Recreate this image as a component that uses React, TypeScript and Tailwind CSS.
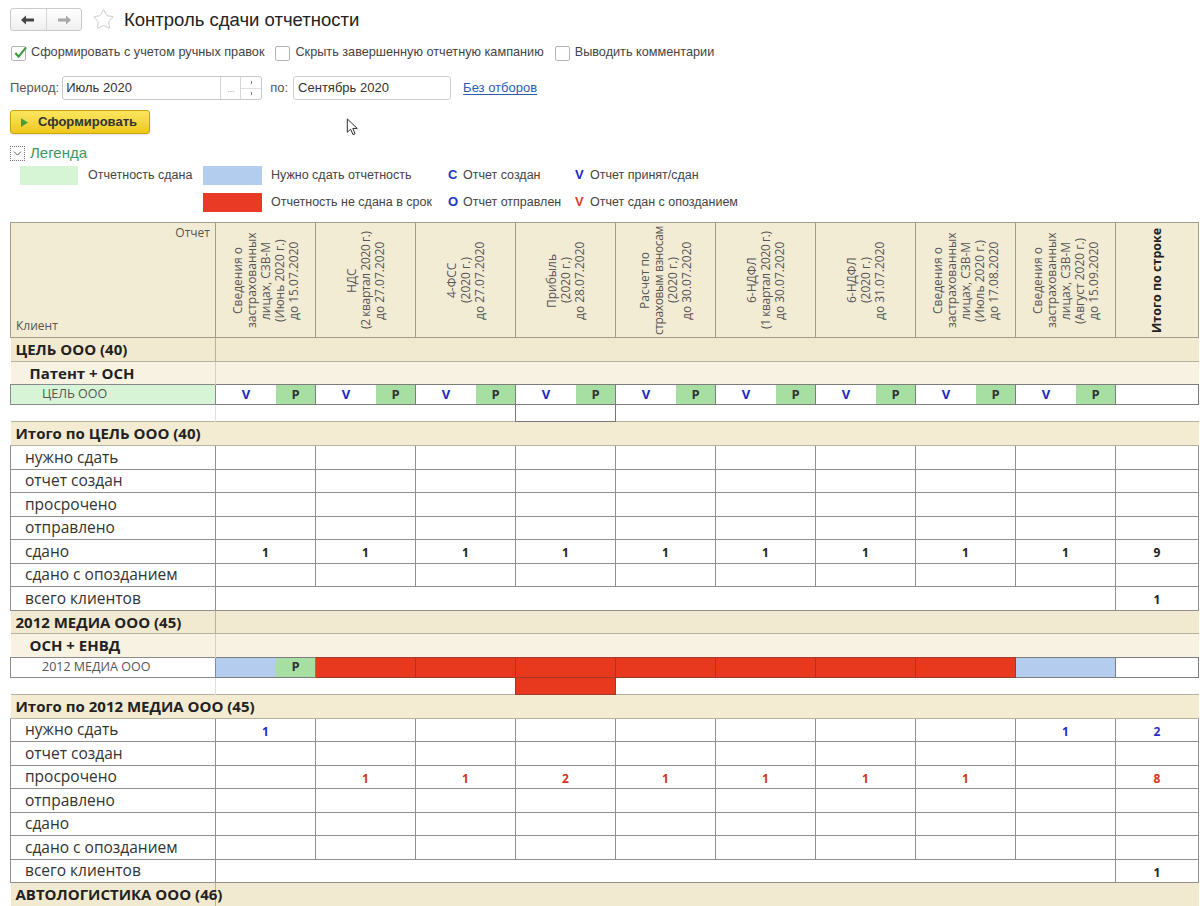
import { Star, ChevronDown } from "lucide-react";

const reports: string[][] = [
  ["Сведения о", "застрахованных", "лицах, СЗВ-М", "(Июнь 2020 г.)", "до 15.07.2020"],
  ["НДС", "(2 квартал 2020 г.)", "до 27.07.2020"],
  ["4-ФСС", "(2020 г.)", "до 27.07.2020"],
  ["Прибыль", "(2020 г.)", "до 28.07.2020"],
  ["Расчет по", "страховым взносам", "(2020 г.)", "до 30.07.2020"],
  ["6-НДФЛ", "(1 квартал 2020 г.)", "до 30.07.2020"],
  ["6-НДФЛ", "(2020 г.)", "до 31.07.2020"],
  ["Сведения о", "застрахованных", "лицах, СЗВ-М", "(Июль 2020 г.)", "до 17.08.2020"],
  ["Сведения о", "застрахованных", "лицах, СЗВ-М", "(Август 2020 г.)", "до 15.09.2020"],
];

type Stat = { label: string; values?: (number | null)[]; total?: number; tone?: "black" | "blue" | "red"; merged?: boolean };

const section1: Stat[] = [
  { label: "нужно сдать" },
  { label: "отчет создан" },
  { label: "просрочено" },
  { label: "отправлено" },
  { label: "сдано", values: [1, 1, 1, 1, 1, 1, 1, 1, 1], total: 9, tone: "black" },
  { label: "сдано с опозданием" },
  { label: "всего клиентов", total: 1, tone: "black", merged: true },
];

const section2: Stat[] = [
  { label: "нужно сдать", values: [1, null, null, null, null, null, null, null, 1], total: 2, tone: "blue" },
  { label: "отчет создан" },
  { label: "просрочено", values: [null, 1, 1, 2, 1, 1, 1, 1, null], total: 8, tone: "red" },
  { label: "отправлено" },
  { label: "сдано" },
  { label: "сдано с опозданием" },
  { label: "всего клиентов", total: 1, tone: "black", merged: true },
];

const toneClass = {
  black: "text-[#222]",
  blue: "text-[#1f2fc8]",
  red: "text-[#d8321c]",
};

function Checkbox({ checked }: { checked?: boolean }) {
  return (
    <span className="relative inline-block w-[15px] h-[15px] border border-[#b5b5b5] rounded-[2px] bg-white shrink-0">
      {checked && (
        <svg viewBox="0 0 16 16" className="absolute left-[1px] -top-[2px] w-[15px] h-[15px]">
          <path d="M2.5 8.5 L6 12.5 L14 2.5" fill="none" stroke="#3c9a3c" strokeWidth="2.2" />
        </svg>
      )}
    </span>
  );
}

function StatRows({ rows }: { rows: Stat[] }) {
  return (
    <>
      {rows.map((r) => (
        <tr key={r.label} className="h-[23.5px]">
          <td className="p-0 pl-[14px] border border-[#8f8f8f] text-[15.5px] text-[#333] leading-none bg-white whitespace-nowrap">{r.label}</td>
          {r.merged ? (
            <td colSpan={9} className="p-0 border border-[#8f8f8f] bg-white" />
          ) : (
            Array.from({ length: 9 }).map((_, i) => (
              <td
                key={i}
                className={`p-0 pt-[4px] border border-[#8f8f8f] bg-white text-center text-[12px] font-bold ${toneClass[r.tone ?? "black"]}`}
              >
                {r.values?.[i] ?? ""}
              </td>
            ))
          )}
          <td className={`p-0 pt-[4px] border border-[#8f8f8f] bg-white text-center text-[12px] font-bold ${toneClass[r.tone ?? "black"]}`}>
            {r.total ?? ""}
          </td>
        </tr>
      ))}
    </>
  );
}

function GroupRow({ title }: { title: string }) {
  return (
    <tr className="h-[23px]">
      <td className="p-0 pl-[5px] border-y border-r border-[#b8b1a0] border-l-0 bg-[#f2ead0] text-[15px] font-bold text-[#222] whitespace-nowrap">{title}</td>
      <td colSpan={10} className="p-0 border-y border-[#b8b1a0] bg-[#f2ead0]" />
    </tr>
  );
}

function SubRow({ title }: { title: string }) {
  return (
    <tr className="h-[23px]">
      <td className="p-0 pl-[19px] border-r border-[#d6d0c0] bg-[#f7f2e2] text-[15px] font-bold text-[#222]">{title}</td>
      <td colSpan={10} className="p-0 bg-[#f7f2e2]" />
    </tr>
  );
}

function TotalHeader({ title }: { title: string }) {
  return (
    <tr className="h-[24px]">
      <td colSpan={11} className="p-0 pl-[5px] border-y border-[#b8b1a0] bg-[#f3ebd2] text-[15px] font-bold text-[#222] whitespace-nowrap">
        {title}
      </td>
    </tr>
  );
}

function SpillRow({ red }: { red?: boolean }) {
  return (
    <tr className="h-[17px]">
      <td className="p-0 bg-white border-r border-[#e0e0e0]" />
      <td colSpan={3} className="p-0 bg-white" />
      <td className={`p-0 border-x border-b ${red ? "bg-[#e8391f] border-[#9c3a2c]" : "bg-white border-[#777]"}`} />
      <td colSpan={6} className="p-0 bg-white" />
    </tr>
  );
}

export default function App() {
  return (
    <div className="w-[1200px] h-[906px] overflow-hidden bg-white text-[#444] font-['Liberation_Sans',Arial,sans-serif]">
      {/* Title bar */}
      <div className="flex items-center pt-[8px] pl-[10px] h-[31px]">
        <div className="flex h-[23px] w-[72px] border border-[#c9c9c9] rounded-[3px] bg-gradient-to-b from-white to-[#efefef]">
          <div className="flex-1 flex items-center justify-center border-r border-[#d6d6d6]">
            <svg viewBox="0 0 14 10" className="w-[14px] h-[10px]">
              <path d="M0 5 L5 0.5 L5 3.5 L13 3.5 L13 6.5 L5 6.5 L5 9.5 Z" fill="#444" />
            </svg>
          </div>
          <div className="flex-1 flex items-center justify-center">
            <svg viewBox="0 0 14 10" className="w-[14px] h-[10px]">
              <path d="M14 5 L9 0.5 L9 3.5 L1 3.5 L1 6.5 L9 6.5 L9 9.5 Z" fill="#a8a8a8" />
            </svg>
          </div>
        </div>
        <Star className="ml-[10px] w-[23px] h-[23px] text-[#c8c8c8]" strokeWidth={1} />
        <span className="ml-[9px] text-[18.5px] text-[#222]">Контроль сдачи отчетности</span>
      </div>

      {/* Options */}
      <div className="flex items-center mt-[14px] pl-[11px] h-[16px] text-[12.7px] text-[#444]">
        <Checkbox checked />
        <span className="ml-[5px]">Сформировать с учетом ручных правок</span>
        <span className="ml-[11px]" />
        <Checkbox />
        <span className="ml-[5px]">Скрыть завершенную отчетную кампанию</span>
        <span className="ml-[11px]" />
        <Checkbox />
        <span className="ml-[5px]">Выводить комментарии</span>
      </div>

      {/* Period */}
      <div className="flex items-center mt-[15px] pl-[10px] h-[24px] text-[13px]">
        <span className="text-[#555]">Период:</span>
        <div className="ml-[3px] flex h-[24px] w-[200px] border border-[#c8c8c8] rounded-[3px] bg-white">
          <div className="flex-1 pl-[3px] flex items-center text-[#333]">Июль 2020</div>
          <div className="w-[20px] border-l border-[#d6d6d6] flex items-end justify-center pb-[5px] text-[9px] text-[#999] leading-none">...</div>
          <div className="w-[21px] border-l border-[#d6d6d6] flex flex-col">
            <div className="flex-1 border-b border-[#e0e0e0] flex items-center justify-center">
              <span className="block w-[1px] h-[3px] bg-[#777]" />
            </div>
            <div className="flex-1 flex items-center justify-center">
              <span className="block w-[1px] h-[3px] bg-[#777]" />
            </div>
          </div>
        </div>
        <span className="ml-[8px] text-[#555]">по:</span>
        <div className="ml-[5px] flex items-center h-[24px] w-[158px] border border-[#d0d0d0] rounded-[3px] pl-[4px] text-[#333]">Сентябрь 2020</div>
        <a className="ml-[12px] text-[#2b5eb3] underline underline-offset-2">Без отборов</a>
      </div>

      {/* Generate button + cursor */}
      <div className="flex items-start mt-[10px] pl-[10px] h-[25px]">
        <button className="flex items-center h-[24px] w-[140px] rounded-[3px] border border-[#c8a50a] bg-gradient-to-b from-[#fbe65e] to-[#efc816] text-[13px] font-bold text-[#333] shadow-sm">
          <svg viewBox="0 0 8 10" className="ml-[10px] w-[7px] h-[9px]">
            <path d="M0 0 L8 5 L0 10 Z" fill="#3fa23f" />
          </svg>
          <span className="ml-[10px]">Сформировать</span>
        </button>
        <svg viewBox="0 0 14 20" className="ml-[196px] mt-[8px] w-[14px] h-[19px]">
          <path d="M1 1 L1 15 L4.5 11.8 L7 17.5 L9.2 16.6 L6.8 11 L11.5 11 Z" fill="white" stroke="#222" strokeWidth="1" strokeLinejoin="round" />
        </svg>
      </div>

      {/* Legend */}
      <div className="flex items-center mt-[10px] pl-[10px] h-[16px]">
        <span className="flex items-center justify-center w-[15px] h-[15px] border border-dotted border-[#777]">
          <ChevronDown className="w-[13px] h-[13px] text-[#444]" strokeWidth={1.6} />
        </span>
        <span className="ml-[5px] text-[15px] text-[#3b9866]">Легенда</span>
      </div>
      <div className="mt-[4px] pl-[20px] text-[12.5px] text-[#444]">
        <div className="flex items-center h-[20px]">
          <span className="w-[58px] h-[19px] bg-[#d6f5d5]" />
          <span className="ml-[10px] w-[115px]">Отчетность сдана</span>
          <span className="w-[59px] h-[19px] bg-[#b3cdef]" />
          <span className="ml-[9px] w-[177px]">Нужно сдать отчетность</span>
          <span className="w-[15px] font-bold text-[#2038c6] text-[13px]">С</span>
          <span className="w-[112px]">Отчет создан</span>
          <span className="w-[15px] font-bold text-[#1a28c0] text-[13px]">V</span>
          <span>Отчет принят/сдан</span>
        </div>
        <div className="flex items-center h-[20px] mt-[7px]">
          <span className="w-[58px] h-[19px]" />
          <span className="ml-[10px] w-[115px]" />
          <span className="w-[59px] h-[19px] bg-[#e83a24]" />
          <span className="ml-[9px] w-[177px]">Отчетность не сдана в срок</span>
          <span className="w-[15px] font-bold text-[#2038c6] text-[13px]">О</span>
          <span className="w-[112px]">Отчет отправлен</span>
          <span className="w-[15px] font-bold text-[#e0401f] text-[13px]">V</span>
          <span>Отчет сдан с опозданием</span>
        </div>
      </div>

      {/* Report table */}
      <table className="mt-[10px] ml-[10px] w-[1188px] table-fixed border-collapse font-['Open_Sans',sans-serif]">
        <colgroup>
          <col className="w-[205px]" />
          {reports.map((_, i) => (
            <col key={i} className="w-[100px]" />
          ))}
          <col className="w-[83px]" />
        </colgroup>
        <tbody>
          <tr className="h-[115px]">
            <td className="p-0 border border-[#a39c89] bg-[#f3ecd5] align-top">
              <div className="flex flex-col justify-between h-[113px] text-[12px] text-[#555] px-[5px] pt-[1px] pb-[1px]">
                <span className="self-end">Отчет</span>
                <span>Клиент</span>
              </div>
            </td>
            {reports.map((lines, i) => (
              <td key={i} className="p-0 border border-[#a39c89] bg-[#f3ecd5]">
                <div className="flex items-center justify-center h-[113px] overflow-hidden">
                  <div className="[writing-mode:vertical-rl] rotate-180 h-[113px] text-center text-[12px] leading-[14px] text-[#555] whitespace-nowrap">
                    {lines.map((l) => (
                      <div key={l} className={l.length > 16 ? "tracking-[-0.4px]" : ""}>
                        {l}
                      </div>
                    ))}
                  </div>
                </div>
              </td>
            ))}
            <td className="p-0 border border-[#a39c89] bg-[#f3ecd5]">
              <div className="flex items-center justify-center h-[113px]">
                <div className="[writing-mode:vertical-rl] rotate-180 h-[113px] text-center text-[12.5px] font-bold text-[#222] whitespace-nowrap">
                  Итого по строке
                </div>
              </div>
            </td>
          </tr>

          <GroupRow title="ЦЕЛЬ ООО (40)" />
          <SubRow title="Патент + ОСН" />
          <tr className="h-[20px]">
            <td className="p-0 pl-[31px] border border-[#8a8a8a] bg-[#d7f5d6] text-[12.5px] text-[#555]">ЦЕЛЬ ООО</td>
            {reports.map((_, i) => (
              <td key={i} className="p-0 border border-[#7c7c7c]">
                <div className="flex h-[19px] text-[13px] font-bold">
                  <span className="w-[60px] flex items-center justify-center bg-white text-[#1a28c0]">V</span>
                  <span className="flex-1 flex items-center justify-center bg-[#a6dfa1] text-[#333]">Р</span>
                </div>
              </td>
            ))}
            <td className="p-0 border border-[#7c7c7c] bg-white" />
          </tr>
          <SpillRow />
          <TotalHeader title="Итого по ЦЕЛЬ ООО (40)" />
          <StatRows rows={section1} />

          <GroupRow title="2012 МЕДИА ООО (45)" />
          <SubRow title="ОСН + ЕНВД" />
          <tr className="h-[20px]">
            <td className="p-0 pl-[31px] border border-[#8a8a8a] bg-white text-[12.5px] text-[#555]">2012 МЕДИА ООО</td>
            <td className="p-0 border border-[#7c7c7c]">
              <div className="flex h-[19px] text-[13px] font-bold">
                <span className="w-[60px] bg-[#b4cdee]" />
                <span className="flex-1 flex items-center justify-center bg-[#a6dfa1] text-[#333]">Р</span>
              </div>
            </td>
            {Array.from({ length: 7 }).map((_, i) => (
              <td key={i} className="p-0 border border-[#9c3a2c] bg-[#e8391f]" />
            ))}
            <td className="p-0 border border-[#7c7c7c] bg-[#b4cdee]" />
            <td className="p-0 border border-[#7c7c7c] bg-white" />
          </tr>
          <SpillRow red />
          <TotalHeader title="Итого по 2012 МЕДИА ООО (45)" />
          <StatRows rows={section2} />

          <GroupRow title="АВТОЛОГИСТИКА ООО (46)" />
        </tbody>
      </table>
    </div>
  );
}
